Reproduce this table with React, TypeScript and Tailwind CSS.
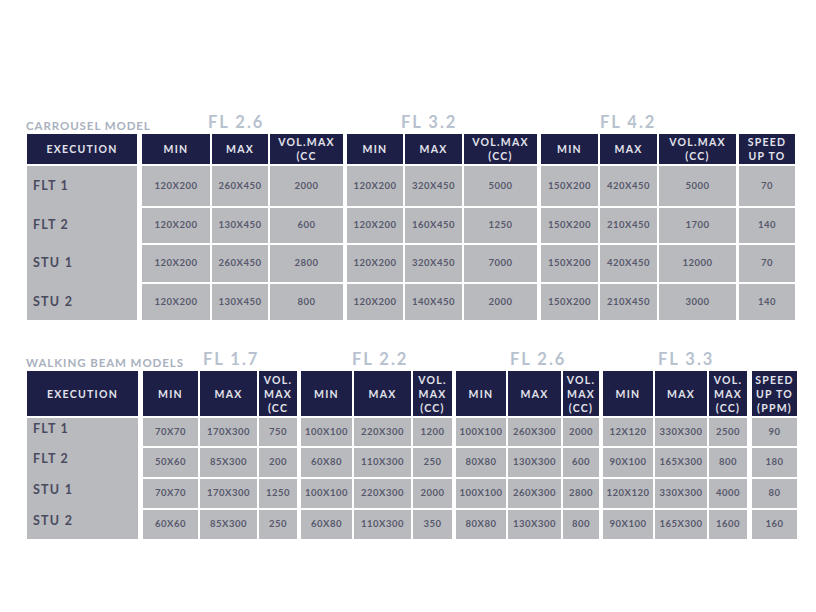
import React from "react";

type Col = { head: string[]; w: string };
type Group = { title?: string; pad?: string; gap: string; cols: Col[]; rows: string[][] };
type Spec = {
  label: string;
  execW: string;
  headH: string;
  rowHs: string[];
  labelTop?: boolean;
  groups: Group[];
};

const carrousel: Spec = {
  label: "CARROUSEL MODEL",
  execW: "w-[110px]",
  headH: "h-[30px]",
  rowHs: ["h-[40px]", "h-[35px]", "h-[37px]", "h-[36px]"],
  groups: [
    {
      title: "FL 2.6",
      pad: "pl-[66px]",
      gap: "ml-[5px]",
      cols: [
        { head: ["MIN"], w: "w-[68px]" },
        { head: ["MAX"], w: "w-[56px]" },
        { head: ["VOL.MAX", "(CC"], w: "w-[73px]" },
      ],
      rows: [
        ["120X200", "260X450", "2000"],
        ["120X200", "130X450", "600"],
        ["120X200", "260X450", "2800"],
        ["120X200", "130X450", "800"],
      ],
    },
    {
      title: "FL 3.2",
      pad: "pl-[54px]",
      gap: "ml-[4px]",
      cols: [
        { head: ["MIN"], w: "w-[56px]" },
        { head: ["MAX"], w: "w-[57px]" },
        { head: ["VOL.MAX", "(CC)"], w: "w-[73px]" },
      ],
      rows: [
        ["120X200", "320X450", "5000"],
        ["120X200", "160X450", "1250"],
        ["120X200", "320X450", "7000"],
        ["120X200", "140X450", "2000"],
      ],
    },
    {
      title: "FL 4.2",
      pad: "pl-[59px]",
      gap: "ml-[4px]",
      cols: [
        { head: ["MIN"], w: "w-[57px]" },
        { head: ["MAX"], w: "w-[57px]" },
        { head: ["VOL.MAX", "(CC)"], w: "w-[77px]" },
      ],
      rows: [
        ["150X200", "420X450", "5000"],
        ["150X200", "210X450", "1700"],
        ["150X200", "420X450", "12000"],
        ["150X200", "210X450", "3000"],
      ],
    },
    {
      gap: "ml-[3px]",
      cols: [{ head: ["SPEED", "UP TO"], w: "w-[56px]" }],
      rows: [["70"], ["140"], ["70"], ["140"]],
    },
  ],
};

const walking: Spec = {
  label: "WALKING BEAM MODELS",
  execW: "w-[111px]",
  headH: "h-[45px]",
  rowHs: ["h-[28px]", "h-[29px]", "h-[29px]", "h-[29px]"],
  labelTop: true,
  groups: [
    {
      title: "FL 1.7",
      pad: "pl-[60px]",
      gap: "ml-[5px]",
      cols: [
        { head: ["MIN"], w: "w-[55px]" },
        { head: ["MAX"], w: "w-[57px]" },
        { head: ["VOL.", "MAX", "(CC"], w: "w-[38px]" },
      ],
      rows: [
        ["70X70", "170X300", "750"],
        ["50X60", "85X300", "200"],
        ["70X70", "170X300", "1250"],
        ["60X60", "85X300", "250"],
      ],
    },
    {
      title: "FL 2.2",
      pad: "pl-[51px]",
      gap: "ml-[4px]",
      cols: [
        { head: ["MIN"], w: "w-[51px]" },
        { head: ["MAX"], w: "w-[57px]" },
        { head: ["VOL.", "MAX", "(CC)"], w: "w-[39px]" },
      ],
      rows: [
        ["100X100", "220X300", "1200"],
        ["60X80", "110X300", "250"],
        ["100X100", "220X300", "2000"],
        ["60X80", "110X300", "350"],
      ],
    },
    {
      title: "FL 2.6",
      pad: "pl-[54px]",
      gap: "ml-[4px]",
      cols: [
        { head: ["MIN"], w: "w-[50px]" },
        { head: ["MAX"], w: "w-[53px]" },
        { head: ["VOL.", "MAX", "(CC)"], w: "w-[36px]" },
      ],
      rows: [
        ["100X100", "260X300", "2000"],
        ["80X80", "130X300", "600"],
        ["100X100", "260X300", "2800"],
        ["80X80", "130X300", "800"],
      ],
    },
    {
      title: "FL 3.3",
      pad: "pl-[55px]",
      gap: "ml-[4px]",
      cols: [
        { head: ["MIN"], w: "w-[50px]" },
        { head: ["MAX"], w: "w-[52px]" },
        { head: ["VOL.", "MAX", "(CC)"], w: "w-[38px]" },
      ],
      rows: [
        ["12X120", "330X300", "2500"],
        ["90X100", "165X300", "800"],
        ["120X120", "330X300", "4000"],
        ["90X100", "165X300", "1600"],
      ],
    },
    {
      gap: "ml-[5px]",
      cols: [{ head: ["SPEED", "UP TO", "(PPM)"], w: "w-[45px]" }],
      rows: [["90"], ["180"], ["80"], ["160"]],
    },
  ],
};

const EXEC_ROWS = ["FLT 1", "FLT 2", "STU 1", "STU 2"];

function Head({ lines, h }: { lines: string[]; h: string }) {
  return (
    <div
      className={
        "flex flex-col items-center justify-center bg-[#1e1f46] text-[#e2e3ec] text-[10.5px] font-bold tracking-[0.12em] leading-[14px] text-center " +
        h
      }
    >
      {lines.map((l) => (
        <span key={l}>{l}</span>
      ))}
    </div>
  );
}

function ModelTable({ spec }: { spec: Spec }) {
  return (
    <div className="flex">
      {/* execution column */}
      <div className={"flex flex-col " + spec.execW}>
        <div className="h-[24px] flex items-end pb-[3px] -ml-[1px] whitespace-nowrap text-[11.5px] font-bold tracking-[0.08em] text-[#a9b1be] leading-none">
          {spec.label}
        </div>
        <Head lines={["EXECUTION"]} h={spec.headH} />
        <div className="mt-[2px] flex flex-col gap-[2px] bg-[#b9babe]">
          {EXEC_ROWS.map((r, i) => (
            <div
              key={r}
              className={
                "flex pl-[6px] text-[12.5px] font-bold tracking-[0.1em] text-[#4a4b5f] leading-none " +
                (spec.labelTop ? "items-start pt-[5px] " : "items-center ") +
                spec.rowHs[i]
              }
            >
              {r}
            </div>
          ))}
        </div>
      </div>

      {spec.groups.map((g, gi) => (
        <div key={gi} className={"flex flex-col " + g.gap}>
          <div
            className={
              "h-[24px] flex items-end pb-[4px] whitespace-nowrap text-[16.5px] font-bold tracking-[0.12em] text-[#b8c2cf] leading-none " +
              (g.pad ?? "")
            }
          >
            {g.title}
          </div>
          <div className="flex gap-[2px]">
            {g.cols.map((c, ci) => (
              <div key={ci} className={"flex flex-col gap-[2px] " + c.w}>
                <Head lines={c.head} h={spec.headH} />
                {g.rows.map((row, ri) => (
                  <div
                    key={ri}
                    className={
                      "flex items-center justify-center bg-[#b9babe] text-[9.5px] font-bold tracking-[0.05em] text-[#57586c] whitespace-nowrap " +
                      spec.rowHs[ri]
                    }
                  >
                    {row[ci]}
                  </div>
                ))}
              </div>
            ))}
          </div>
        </div>
      ))}
    </div>
  );
}

export default function App() {
  return (
    <div className="w-[816px] h-[612px] bg-white pt-[110px] pl-[27px] font-['Lato',sans-serif]">
      <ModelTable spec={carrousel} />
      <div className="mt-[27px]">
        <ModelTable spec={walking} />
      </div>
    </div>
  );
}
